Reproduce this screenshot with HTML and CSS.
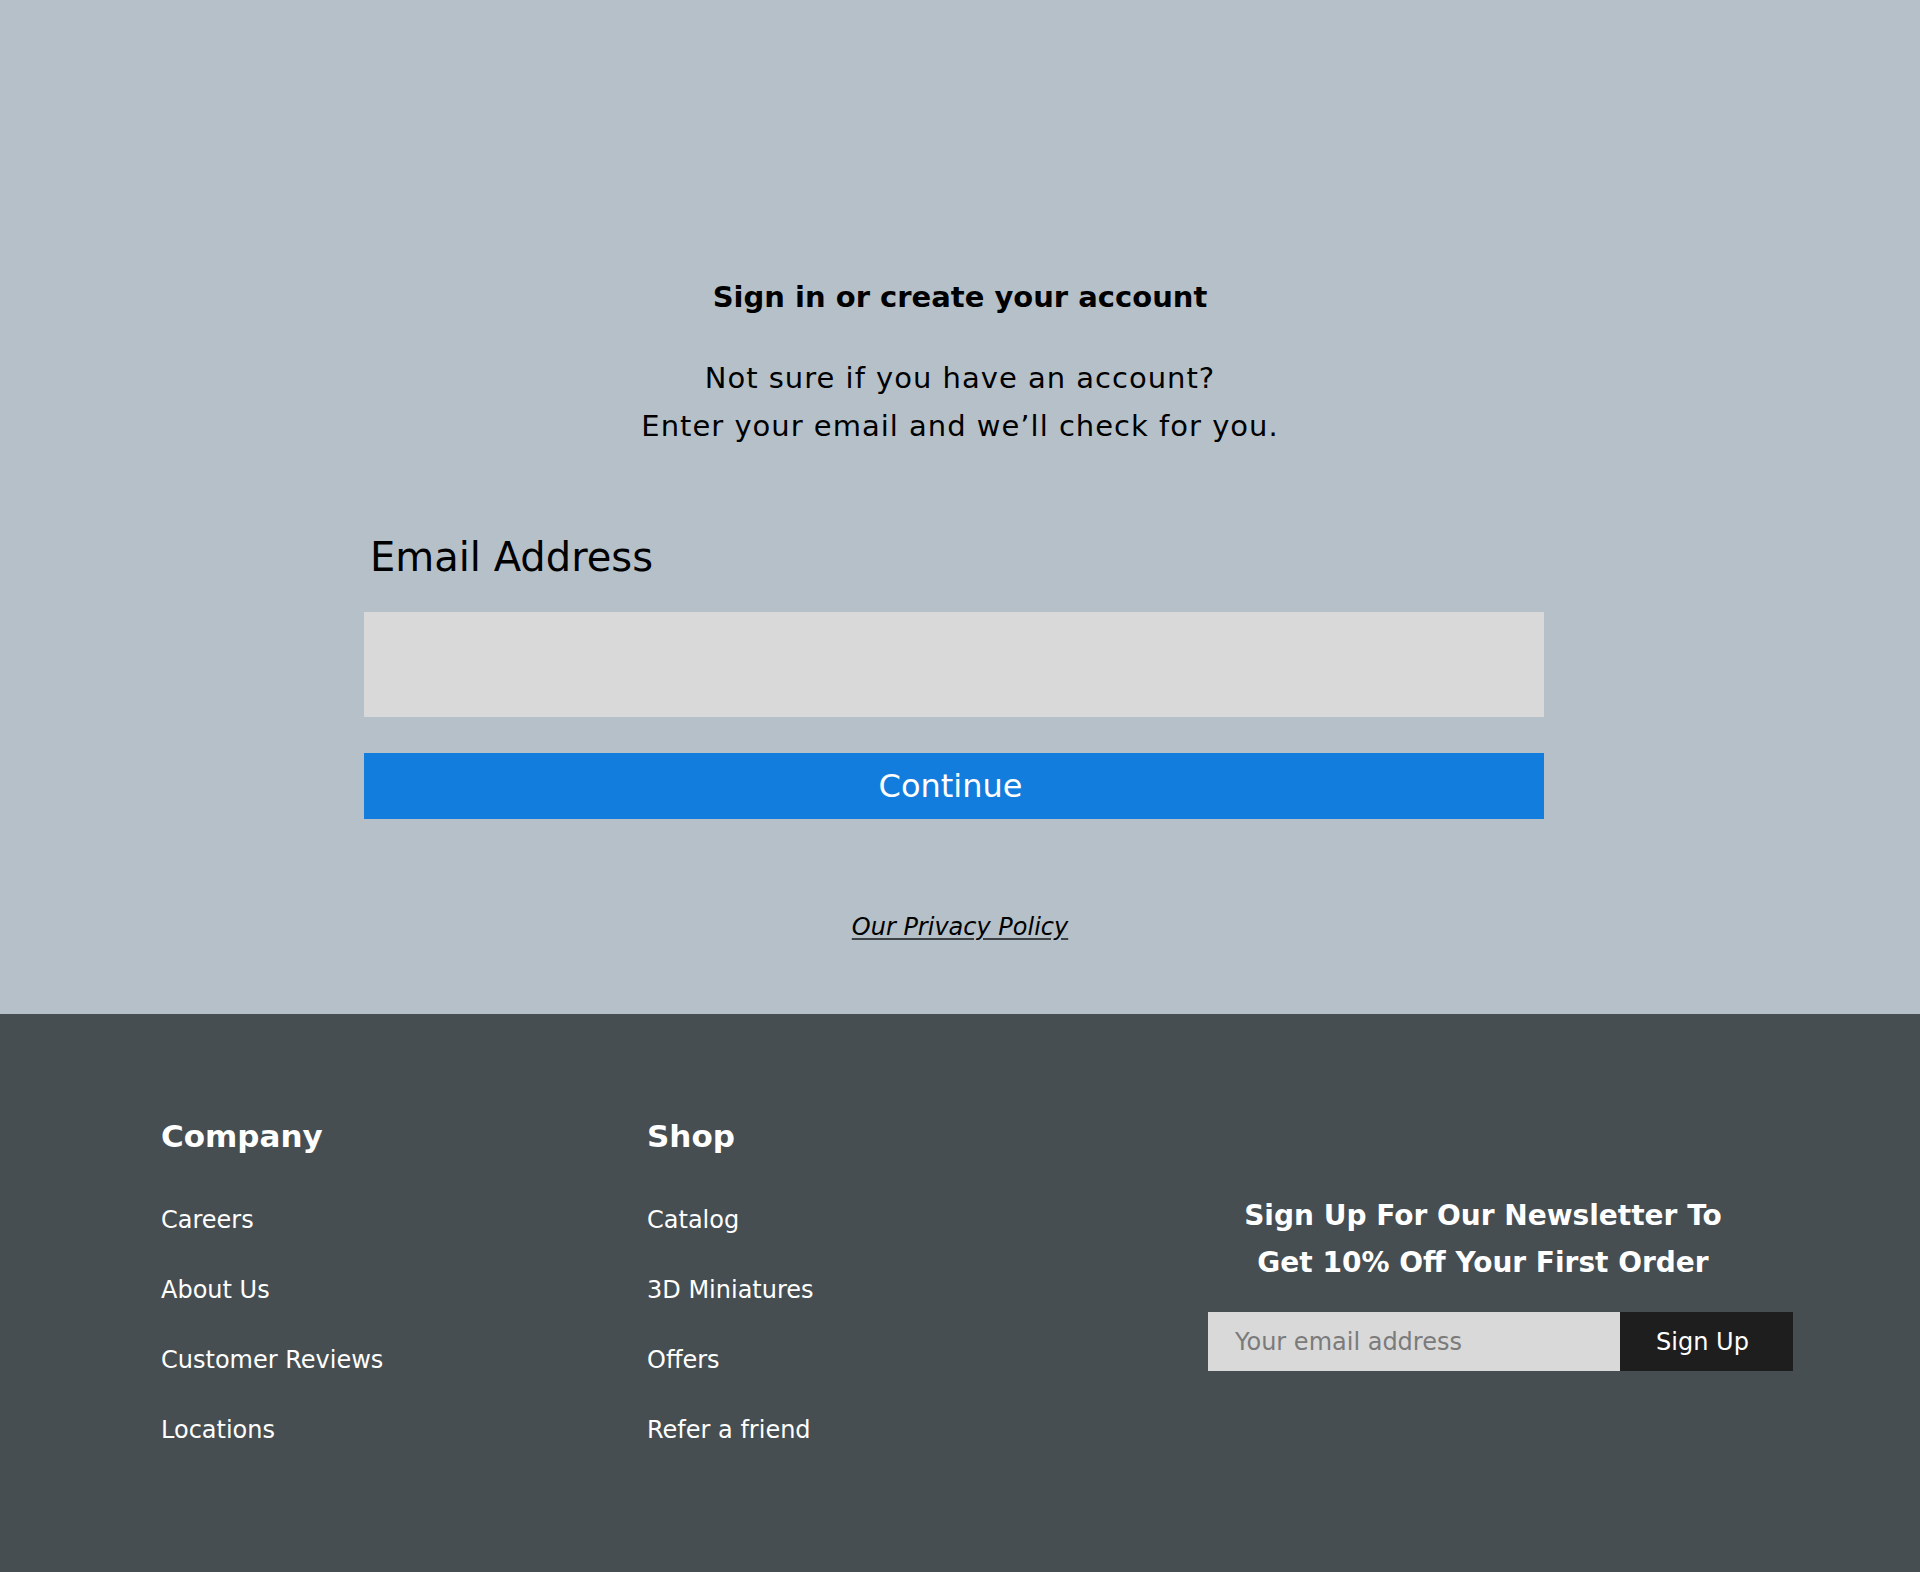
FILE: index.html
```html
<!DOCTYPE html>
<html lang="en">
<head>
<meta charset="utf-8">
<title>Sign in</title>
<link rel="stylesheet" href="styles.css">
</head>
<body>
<main class="signin">
  <h1 class="signin-title">Sign in or create your account</h1>
  <p class="signin-sub">Not sure if you have an account?<br>Enter your email and we’ll check for you.</p>
  <form class="signin-form">
    <label class="signin-label" for="email">Email Address</label>
    <input class="signin-input" id="email" type="email">
    <button class="signin-btn" type="button">Continue</button>
  </form>
  <a class="privacy" href="#">Our Privacy Policy</a>
</main>
<footer class="footer">
  <div class="footer-col">
    <h2 class="footer-title">Company</h2>
    <ul class="footer-links">
      <li><a href="#">Careers</a></li>
      <li><a href="#">About Us</a></li>
      <li><a href="#">Customer Reviews</a></li>
      <li><a href="#">Locations</a></li>
    </ul>
  </div>
  <div class="footer-col">
    <h2 class="footer-title">Shop</h2>
    <ul class="footer-links">
      <li><a href="#">Catalog</a></li>
      <li><a href="#">3D Miniatures</a></li>
      <li><a href="#">Offers</a></li>
      <li><a href="#">Refer a friend</a></li>
    </ul>
  </div>
  <div class="newsletter">
    <h2 class="newsletter-title">Sign Up For Our Newsletter To<br>Get 10% Off Your First Order</h2>
    <form class="newsletter-form">
      <input class="newsletter-input" type="email" placeholder="Your email address">
      <button class="newsletter-btn" type="button">Sign Up</button>
    </form>
  </div>
</footer>
</body>
</html>
```

FILE: styles.css
```css
* { box-sizing: border-box; }
html, body { margin: 0; padding: 0; }
body {
  font-family: "DejaVu Sans", "Liberation Sans", sans-serif;
  color: #000;
  background: #464e52;
}
.signin {
  background: #b5c0c9;
  padding: 280px 0 72px;
  display: flex;
  flex-direction: column;
  align-items: center;
}
.signin-title {
  margin: 0;
  font-size: 29px;
  line-height: 35px;
  font-weight: 700;
  text-align: center;
}
.signin-sub {
  margin: 39px 0 0;
  font-size: 29px;
  line-height: 48px;
  letter-spacing: 1px;
  text-align: center;
}
.signin-form {
  width: 1180px;
  margin: 83px 0 0 -12px;
  display: flex;
  flex-direction: column;
}
.signin-label {
  font-size: 40px;
  line-height: 48px;
  padding-left: 6px;
}
.signin-input {
  margin-top: 31px;
  height: 105px;
  border: 0;
  background: #d9d9d9;
  font: inherit;
  font-size: 24px;
  padding: 0 24px;
  outline: none;
}
.signin-btn {
  margin-top: 36px;
  height: 66px;
  border: 0;
  background: #127ddc;
  color: #fff;
  font-family: inherit;
  font-size: 32px;
  padding: 0 7px 0 0;
  display: flex;
  align-items: center;
  justify-content: center;
  cursor: pointer;
}
.privacy {
  margin-top: 93px;
  font-size: 24px;
  line-height: 30px;
  font-style: italic;
  color: #000;
  text-decoration: underline;
  text-decoration-color: #3c4246;
  text-underline-offset: 3px;
}
.footer {
  height: 558px;
  padding: 104px 0 0 161px;
  display: grid;
  grid-template-columns: 486px 561px 550px;
  align-items: start;
  color: #fff;
}
.footer-title {
  margin: 0;
  font-size: 31px;
  line-height: 37px;
  font-weight: 700;
}
.footer-links {
  list-style: none;
  margin: 50px 0 0;
  padding: 0;
  display: flex;
  flex-direction: column;
  gap: 40px;
}
.footer-links a {
  display: block;
  color: #fff;
  text-decoration: none;
  font-size: 24px;
  line-height: 30px;
}
.newsletter {
  margin-top: 74px;
  min-width: 0;
}
.newsletter-title {
  margin: 0;
  font-size: 28px;
  line-height: 47px;
  font-weight: 700;
  text-align: center;
}
.newsletter-form {
  margin-top: 26px;
  display: flex;
  width: 585px;
  height: 59px;
}
.newsletter-input {
  width: 412px;
  border: 0;
  background: #d9d9d9;
  font-family: inherit;
  font-size: 24px;
  padding: 0 27px;
  color: #333;
  outline: none;
}
.newsletter-input::placeholder { color: #7b7b7b; }
.newsletter-btn {
  width: 173px;
  border: 0;
  background: #1e1e1e;
  color: #fff;
  font-family: inherit;
  font-size: 24px;
  padding: 0 8px 0 0;
  cursor: pointer;
}
```
